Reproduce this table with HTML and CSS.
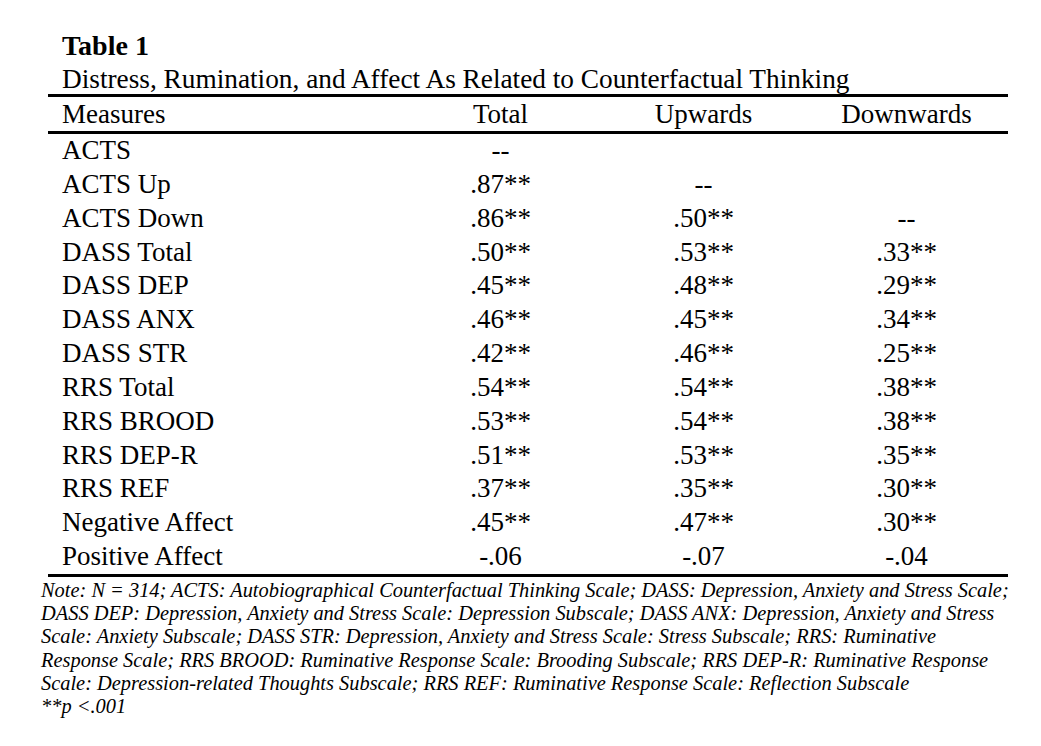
FILE: index.html
```html
<!DOCTYPE html>
<html>
<head>
<meta charset="utf-8">
<link rel="stylesheet" href="styles.css">
</head>
<body>
<div class="page">
  <div class="title">Table 1</div>
  <div class="caption">Distress, Rumination, and Affect As Related to Counterfactual Thinking</div>
  <table class="tbl">
    <thead>
      <tr><th class="lbl">Measures</th><th>Total</th><th>Upwards</th><th>Downwards</th></tr>
    </thead>
    <tbody>
      <tr><td class="lbl">ACTS</td><td>--</td><td></td><td></td></tr>
      <tr><td class="lbl">ACTS Up</td><td>.87**</td><td>--</td><td></td></tr>
      <tr><td class="lbl">ACTS Down</td><td>.86**</td><td>.50**</td><td>--</td></tr>
      <tr><td class="lbl">DASS Total</td><td>.50**</td><td>.53**</td><td>.33**</td></tr>
      <tr><td class="lbl">DASS DEP</td><td>.45**</td><td>.48**</td><td>.29**</td></tr>
      <tr><td class="lbl">DASS ANX</td><td>.46**</td><td>.45**</td><td>.34**</td></tr>
      <tr><td class="lbl">DASS STR</td><td>.42**</td><td>.46**</td><td>.25**</td></tr>
      <tr><td class="lbl">RRS Total</td><td>.54**</td><td>.54**</td><td>.38**</td></tr>
      <tr><td class="lbl">RRS BROOD</td><td>.53**</td><td>.54**</td><td>.38**</td></tr>
      <tr><td class="lbl">RRS DEP-R</td><td>.51**</td><td>.53**</td><td>.35**</td></tr>
      <tr><td class="lbl">RRS REF</td><td>.37**</td><td>.35**</td><td>.30**</td></tr>
      <tr><td class="lbl">Negative Affect</td><td>.45**</td><td>.47**</td><td>.30**</td></tr>
      <tr><td class="lbl">Positive Affect</td><td>-.06</td><td>-.07</td><td>-.04</td></tr>
    </tbody>
  </table>
  <div class="note">
    <span class="nl">Note: N = 314; ACTS: Autobiographical Counterfactual Thinking Scale; DASS: Depression, Anxiety and Stress Scale;</span>
    <span class="nl">DASS DEP: Depression, Anxiety and Stress Scale: Depression Subscale; DASS ANX: Depression, Anxiety and Stress</span>
    <span class="nl">Scale: Anxiety Subscale; DASS STR: Depression, Anxiety and Stress Scale: Stress Subscale; RRS: Ruminative</span>
    <span class="nl">Response Scale; RRS BROOD: Ruminative Response Scale: Brooding Subscale; RRS DEP-R: Ruminative Response</span>
    <span class="nl">Scale: Depression-related Thoughts Subscale; RRS REF: Ruminative Response Scale: Reflection Subscale</span>
    <span class="nl">**p &lt;.001</span>
  </div>
</div>
</body>
</html>
```

FILE: styles.css
```css
html, body {
  margin: 0;
  padding: 0;
  background: #ffffff;
}
body {
  font-family: "Liberation Serif", "Times New Roman", serif;
  color: #000;
}
.page {
  width: 960px;
  margin-left: 48px;
  padding-top: 28px;
}
.title {
  font-weight: bold;
  font-size: 28px;
  line-height: 35px;
  padding-left: 14px;
}
.caption {
  font-size: 27.3px;
  line-height: 29px;
  padding-top: 2px;
  padding-left: 14px;
  white-space: nowrap;
}
.tbl {
  width: 960px;
  border-collapse: collapse;
  font-size: 27px;
}
.tbl thead tr {
  border-top: 3px solid #000;
  border-bottom: 3px solid #000;
}
.tbl tbody tr:last-child {
  border-bottom: 3px solid #000;
}
.tbl th, .tbl td {
  font-weight: normal;
  padding: 0;
  height: 34px;
  line-height: 34px;
  text-align: center;
  width: 203px;
  white-space: nowrap;
}
.tbl td {
  height: 33.85px;
  line-height: 33.85px;
}
.tbl .lbl {
  text-align: left;
  padding-left: 14px;
  width: auto;
}
.note {
  margin-left: -7px;
  font-style: italic;
  font-size: 20.4px;
  line-height: 23.2px;
  padding-top: 2px;
}
.nl {
  display: block;
  white-space: nowrap;
}
```
